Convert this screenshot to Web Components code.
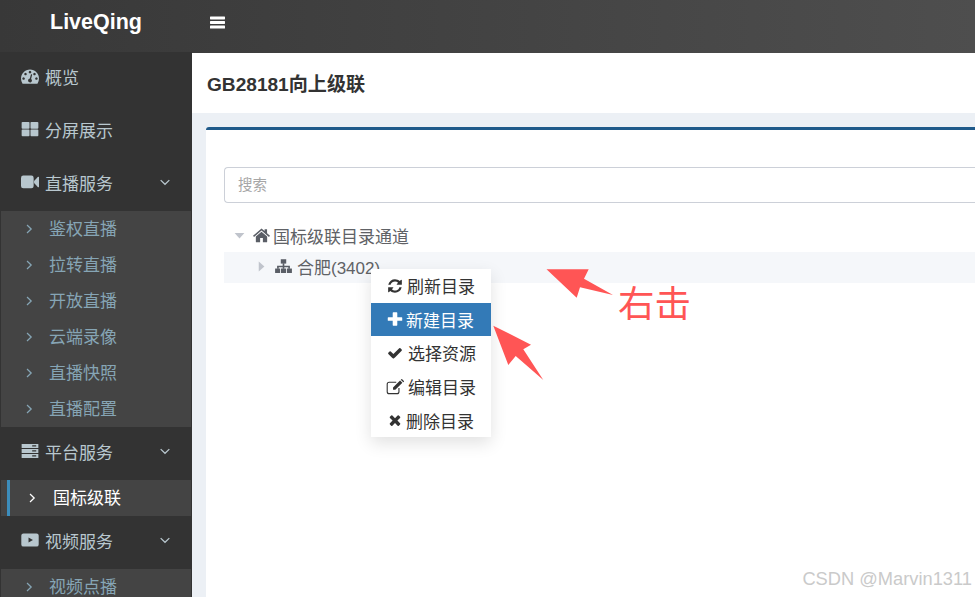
<!DOCTYPE html>
<html lang="zh">
<head>
<meta charset="utf-8">
<title>LiveQing</title>
<style>
  html, body { margin: 0; height: 100%; overflow: hidden; background: #ecf0f5; }
  body { font-family: "Liberation Sans", "Noto Sans CJK SC", sans-serif; }
</style>
</head>
<body>
<lq-app></lq-app>

<script>
// icon shapes, all in a 1792 box
const ICONS = {
  dashboard: '<path d="M384 1152q0-53-37.500-90.500t-90.500-37.500-90.500 37.500-37.500 90.500 37.500 90.500 90.500 37.500 90.500-37.500 37.500-90.500zm192-448q0-53-37.500-90.500t-90.500-37.500-90.500 37.500-37.500 90.500 37.500 90.500 90.500 37.500 90.500-37.500 37.500-90.500zm428 481l101-382q6-26-7.500-48.500t-38.500-29.500-48 6.500-30 39.500l-101 382q-60 5-107 43.500t-63 98.500q-20 77 20 146t117 89 146-20 89-117q16-60-6-117t-72-91zm660-33q0-53-37.500-90.500t-90.500-37.500-90.500 37.500-37.500 90.500 37.500 90.500 90.500 37.500 90.500-37.500 37.500-90.500zm-640-640q0-53-37.500-90.500t-90.500-37.500-90.500 37.500-37.500 90.500 37.500 90.500 90.500 37.500 90.500-37.500 37.500-90.500zm448 192q0-53-37.500-90.500t-90.500-37.500-90.500 37.500-37.500 90.500 37.500 90.500 90.500 37.500 90.500-37.500 37.500-90.500zm320 448q0 261-141 483-19 29-54 29h-1402q-35 0-54-29-141-221-141-483 0-182 71-348t191-286 286-191 348-71 348 71 286 191 191 286 71 348z"/>',
  grid: '<rect x="64" y="190" width="784" height="670" rx="90"/><rect x="944" y="190" width="784" height="670" rx="90"/><rect x="64" y="950" width="784" height="670" rx="90"/><rect x="944" y="950" width="784" height="670" rx="90"/>',
  video: '<rect x="0" y="260" width="1260" height="1270" rx="230"/><path d="M1300 800l370-400q50-40 122 0v990q-72 40-122 0l-370-400z"/>',
  server: '<path fill-rule="evenodd" d="M64 200h1664v390H64zm1050 130v110h400V330zM64 700h1664v390H64zm1050 130v110h400V830zM64 1200h1664v390H64zm1050 130v110h400v-110z"/>',
  youtube: '<path fill-rule="evenodd" d="M250 240h1292q220 0 220 220v872q0 220-220 220H250q-220 0-220-220V460q0-220 220-220zm500 400v512l440-256z"/>',
  bars: '<rect y="180" width="1792" height="350" rx="70"/><rect y="720" width="1792" height="350" rx="70"/><rect y="1260" width="1792" height="350" rx="70"/>',
  home: '<path d="M896 150L0 930l110 125 786-680 786 680 110-125-310-270V240h-260v190zM896 510L300 1010v540q0 60 60 60h390v-460h292v460h390q60 0 60-60V1010z"/>',
  sitemap: '<rect x="610" y="130" width="572" height="460"/><path d="M810 560h172v250h590v330h-172V980H982v160H810V980H392v160H220V810h590z"/><rect x="10" y="1110" width="530" height="470"/><rect x="631" y="1110" width="530" height="470"/><rect x="1252" y="1110" width="530" height="470"/>',
  refresh: '<path d="M1639 1056q0 5-1 7-64 268-268 434.500T892 1664q-146 0-282.500-55T366 1452l-129 129q-19 19-45 19t-45-19-19-45v-448q0-26 19-45t45-19h448q26 0 45 19t19 45-19 45l-137 137q71 66 161 102t187 36q134 0 250-65t186-179q11-17 53-117 8-23 30-23h192q13 0 22.500 9.500t9.500 22.500zm25-800v448q0 26-19 45t-45 19h-448q-26 0-45-19t-19-45 19-45l138-138q-148-137-349-137-134 0-250 65T460 628q-11 17-53 117-8 23-30 23H178q-13 0-22.500-9.500T146 736v-7q65-268 270-434.500T896 128q146 0 284 55.500T1425 340l130-129q19-19 45-19t45 19 19 45z"/>',
  plus: '<path d="M704 150h384q64 0 64 64v490h490q64 0 64 64v256q0 64-64 64h-490v490q0 64-64 64H704q-64 0-64-64v-490H150q-64 0-64-64V768q0-64 64-64h490V214q0-64 64-64z"/>',
  check: '<path d="M1671 566q0 40-28 68l-724 724-136 136q-28 28-68 28t-68-28l-136-136-362-362q-28-28-28-68t28-68l136-136q28-28 68-28t68 28l294 295 656-657q28-28 68-28t68 28l136 136q28 28 28 68z"/>',
  edit: '<path fill="none" stroke="currentColor" stroke-width="110" d="M1290 1000v360q0 200-200 200H320q-200 0-200-200V630q0-200 200-200h700"/><path d="M700 950l700-700 230 230-700 700H700zM1470 180l60-60q40-30 80 0l170 170q30 40 0 80l-60 60z"/>',
  times: '<path d="M1490 1322q0 40-28 68l-136 136q-28 28-68 28t-68-28l-294-294-294 294q-28 28-68 28t-68-28l-136-136q-28-28-28-68t28-68l294-294-294-294q-28-28-28-68t28-68l136-136q28-28 68-28t68 28l294 294 294-294q28-28 68-28t68 28l136 136q28 28 28 68t-28 68l-294 294 294 294q28 28 28 68z"/>',
  chevron: '<path fill="none" stroke="currentColor" stroke-width="190" d="M250 620l646 620 646-620"/>',
  angle: '<path fill="none" stroke="currentColor" stroke-width="190" d="M600 300l620 596-620 596"/>',
  caretDown: '<path d="M100 480h1592L896 1400z"/>',
  caretRight: '<path d="M450 100v1592l920-796z"/>'
}

class LqIcon extends HTMLElement {
  connectedCallback() {
    const size = this.getAttribute('size') || 16
    this.attachShadow({ mode: 'open' }).innerHTML = `
      <style>
        :host { display: inline-flex; flex: none; width: ${size}px; height: ${size}px; }
        svg { width: 100%; height: 100%; fill: currentColor; display: block; }
      </style>
      <svg viewBox="0 0 1792 1792">${ICONS[this.getAttribute('name')]}</svg>`
  }
}
customElements.define('lq-icon', LqIcon)

class LqHeader extends HTMLElement {
  constructor() {
    super()
    this.attachShadow({ mode: 'open' }).innerHTML = `
      <style>
        :host { display: flex; height: 53px; background: linear-gradient(90deg, #383838, #4e4e4e); color: #fff; flex: none; }
        .logo { width: 192px; box-sizing: border-box; padding: 0 0 8px 0; display: flex; align-items: center; justify-content: center; font-size: 21.500px; font-weight: bold; }
        .toggle { display: flex; align-items: center; padding: 0 0 9px 18px; }
      </style>
      <div class="logo"><slot name="logo"></slot></div>
      <div class="toggle"><lq-icon name="bars" size="15"></lq-icon></div>`
  }
}
customElements.define('lq-header', LqHeader)

class LqNavItem extends HTMLElement {
  connectedCallback() {
    const open = this.hasAttribute('expandable')
    this.attachShadow({ mode: 'open' }).innerHTML = `
      <style>
        :host { display: flex; align-items: center; height: 53px; padding: 0 21px 5px 21px; box-sizing: border-box; color: #b8c7ce; font-size: 17px; }
        lq-icon { margin-right: 6px; }
        .label { flex: 1; }
      </style>
      <lq-icon name="${this.getAttribute('icon')}" size="18"></lq-icon>
      <span class="label"><slot></slot></span>
      ${open ? '<lq-icon name="chevron" size="12" style="margin:0"></lq-icon>' : ''}`
  }
}
customElements.define('lq-nav-item', LqNavItem)

class LqSubMenu extends HTMLElement {
  constructor() {
    super()
    this.attachShadow({ mode: 'open' }).innerHTML = `
      <style>
        :host { display: block; margin: 0 1px; background: #444; }
      </style>
      <slot></slot>`
  }
}
customElements.define('lq-sub-menu', LqSubMenu)

class LqSubItem extends HTMLElement {
  connectedCallback() {
    this.attachShadow({ mode: 'open' }).innerHTML = `
      <style>
        :host { display: flex; align-items: center; height: 36px; box-sizing: border-box; padding: 0 0 3px 22px; color: #86a5b5; font-size: 17px; }
        :host([active]) { color: #fff; margin-left: 6px; padding-left: 16px; border-left: 3px solid #3c8dbc; }
        .label { margin-left: 14px; }
        :host([active]) .label { margin-left: 15px; }
        lq-icon { margin-top: 2px; }
      </style>
      <lq-icon name="angle" size="12"></lq-icon>
      <span class="label"><slot></slot></span>`
  }
}
customElements.define('lq-sub-item', LqSubItem)

class LqSidebar extends HTMLElement {
  constructor() {
    super()
    this.attachShadow({ mode: 'open' }).innerHTML = `
      <style>
        :host { display: block; width: 192px; flex: none; background: #333; overflow: hidden; margin-top: -1px; padding-top: 0; }
      </style>
      <slot></slot>`
  }
}
customElements.define('lq-sidebar', LqSidebar)

class LqTreeNode extends HTMLElement {
  connectedCallback() {
    const right = this.hasAttribute('collapsed')
    this.attachShadow({ mode: 'open' }).innerHTML = `
      <style>
        :host { display: flex; align-items: center; height: 31px; box-sizing: border-box; color: #606266; font-size: 17px; padding: 0 0 3px 10px; }
        :host([level="1"]) { padding: 0 0 2px 32px; background: #f5f7fa; }
        .caret { color: #c0c4cc; margin-right: 8px; }
        .ico { margin-right: 3px; color: #5a5e66; }
        :host([level="1"]) .ico { margin-right: 5px; }
      </style>
      <lq-icon class="caret" name="${right ? 'caretRight' : 'caretDown'}" size="11"></lq-icon>
      <lq-icon class="ico" name="${this.getAttribute('icon')}" size="17"></lq-icon>
      <span><slot></slot></span>`
  }
}
customElements.define('lq-tree-node', LqTreeNode)

class LqContextMenu extends HTMLElement {
  constructor() {
    super()
    this.attachShadow({ mode: 'open' }).innerHTML = `
      <style>
        :host { position: absolute; left: 371px; top: 269px; width: 120px; height: 168px; display: grid; grid-auto-rows: 1fr; background: #fff; box-shadow: 0 6px 16px rgba(0,0,0,.12); }
      </style>
      <slot></slot>`
  }
}
customElements.define('lq-context-menu', LqContextMenu)

class LqMenuItem extends HTMLElement {
  connectedCallback() {
    const gap = this.getAttribute('gap') || 3
    this.attachShadow({ mode: 'open' }).innerHTML = `
      <style>
        :host { display: flex; align-items: center; padding-left: ${this.getAttribute('inset') || 17}px; gap: ${gap}px; color: #333; font-size: 17px; }
        :host([active]) { background: #337ab7; color: #fff; }
      </style>
      <lq-icon name="${this.getAttribute('icon')}" size="${this.getAttribute('size') || 16}"></lq-icon>
      <span><slot></slot></span>`
  }
}
customElements.define('lq-menu-item', LqMenuItem)

class LqContent extends HTMLElement {
  constructor() {
    super()
    this.attachShadow({ mode: 'open' }).innerHTML = `
      <style>
        :host { display: flex; flex-direction: column; flex: 1; min-width: 0; background: #ecf0f5; }
        .title { height: 60px; flex: none; background: #fff; display: flex; align-items: center; padding: 0 0 1px 15px; box-sizing: border-box; font-size: 19.100px; font-weight: bold; color: #333; }
        .wrap { flex: 1; padding: 14px 0 0 14px; display: flex; }
        .box { flex: 1; background: #fff; border-top: 3px solid #1f5a8a; border-radius: 3px 0 0 0; padding: 37px 0 0 18px; }
        .search { height: 36px; box-sizing: border-box; border: 1px solid #ccd0d8; border-right: 0; border-radius: 4px 0 0 4px; display: flex; align-items: center; padding: 0 0 3px 13px; font-size: 14.500px; color: #a6a6a6; margin-bottom: 18px; }
      </style>
      <div class="title"><slot name="title"></slot></div>
      <div class="wrap">
        <div class="box">
          <div class="search"><slot name="placeholder"></slot></div>
          <slot></slot>
        </div>
      </div>`
  }
}
customElements.define('lq-content', LqContent)

class LqArrows extends HTMLElement {
  constructor() {
    super()
    this.attachShadow({ mode: 'open' }).innerHTML = `
      <style>
        :host { position: absolute; inset: 0; pointer-events: none; }
        svg { position: absolute; inset: 0; width: 100%; height: 100%; }
        .note { position: absolute; left: 618px; top: 281px; font-size: 36.500px; line-height: 48px; color: #ff5555; }
        .mark { position: absolute; right: 3px; bottom: 7px; font-size: 18.300px; color: #cacaca; }
      </style>
      <svg viewBox="0 0 975 597" fill="#ff5555">
        <polygon points="546.500,269.300 588.700,269.300 584,278.700 613,295 580,287.300 576.700,297.700"/>
        <polygon points="493.300,325.700 531,344.700 523.300,349.300 543.300,380 515.700,356 508.300,365"/>
      </svg>
      <div class="note">右击</div>
      <div class="mark">CSDN @Marvin1311</div>`
  }
}
customElements.define('lq-arrows', LqArrows)

class LqApp extends HTMLElement {
  constructor() {
    super()
    this.attachShadow({ mode: 'open' }).innerHTML = `
      <style>
        :host { display: flex; flex-direction: column; height: 597px; width: 975px; overflow: hidden; position: relative; font-family: "Liberation Sans", "Noto Sans CJK SC", sans-serif; }
        .body { display: flex; flex: 1; min-height: 0; }
      </style>
      <lq-header><span slot="logo">LiveQing</span></lq-header>
      <div class="body">
        <lq-sidebar>
          <lq-nav-item icon="dashboard">概览</lq-nav-item>
          <lq-nav-item icon="grid">分屏展示</lq-nav-item>
          <lq-nav-item icon="video" expandable>直播服务</lq-nav-item>
          <lq-sub-menu>
            <lq-sub-item>鉴权直播</lq-sub-item>
            <lq-sub-item>拉转直播</lq-sub-item>
            <lq-sub-item>开放直播</lq-sub-item>
            <lq-sub-item>云端录像</lq-sub-item>
            <lq-sub-item>直播快照</lq-sub-item>
            <lq-sub-item>直播配置</lq-sub-item>
          </lq-sub-menu>
          <lq-nav-item icon="server" expandable>平台服务</lq-nav-item>
          <lq-sub-menu>
            <lq-sub-item active>国标级联</lq-sub-item>
          </lq-sub-menu>
          <lq-nav-item icon="youtube" expandable>视频服务</lq-nav-item>
          <lq-sub-menu>
            <lq-sub-item>视频点播</lq-sub-item>
          </lq-sub-menu>
        </lq-sidebar>
        <lq-content>
          <span slot="title">GB28181向上级联</span>
          <span slot="placeholder">搜索</span>
          <lq-tree-node icon="home">国标级联目录通道</lq-tree-node>
          <lq-tree-node icon="sitemap" level="1" collapsed>合肥(3402)</lq-tree-node>
        </lq-content>
      </div>
      <lq-context-menu>
        <lq-menu-item icon="refresh" inset="16" gap="4" size="16">刷新目录</lq-menu-item>
        <lq-menu-item icon="plus" inset="16" gap="3" size="16" active>新建目录</lq-menu-item>
        <lq-menu-item icon="check" inset="16" gap="5" size="16">选择资源</lq-menu-item>
        <lq-menu-item icon="edit" inset="15" gap="4" size="18">编辑目录</lq-menu-item>
        <lq-menu-item icon="times" inset="16" gap="3" size="16">删除目录</lq-menu-item>
      </lq-context-menu>
      <lq-arrows></lq-arrows>`
  }
}
customElements.define('lq-app', LqApp)
</script>
</body>
</html>
